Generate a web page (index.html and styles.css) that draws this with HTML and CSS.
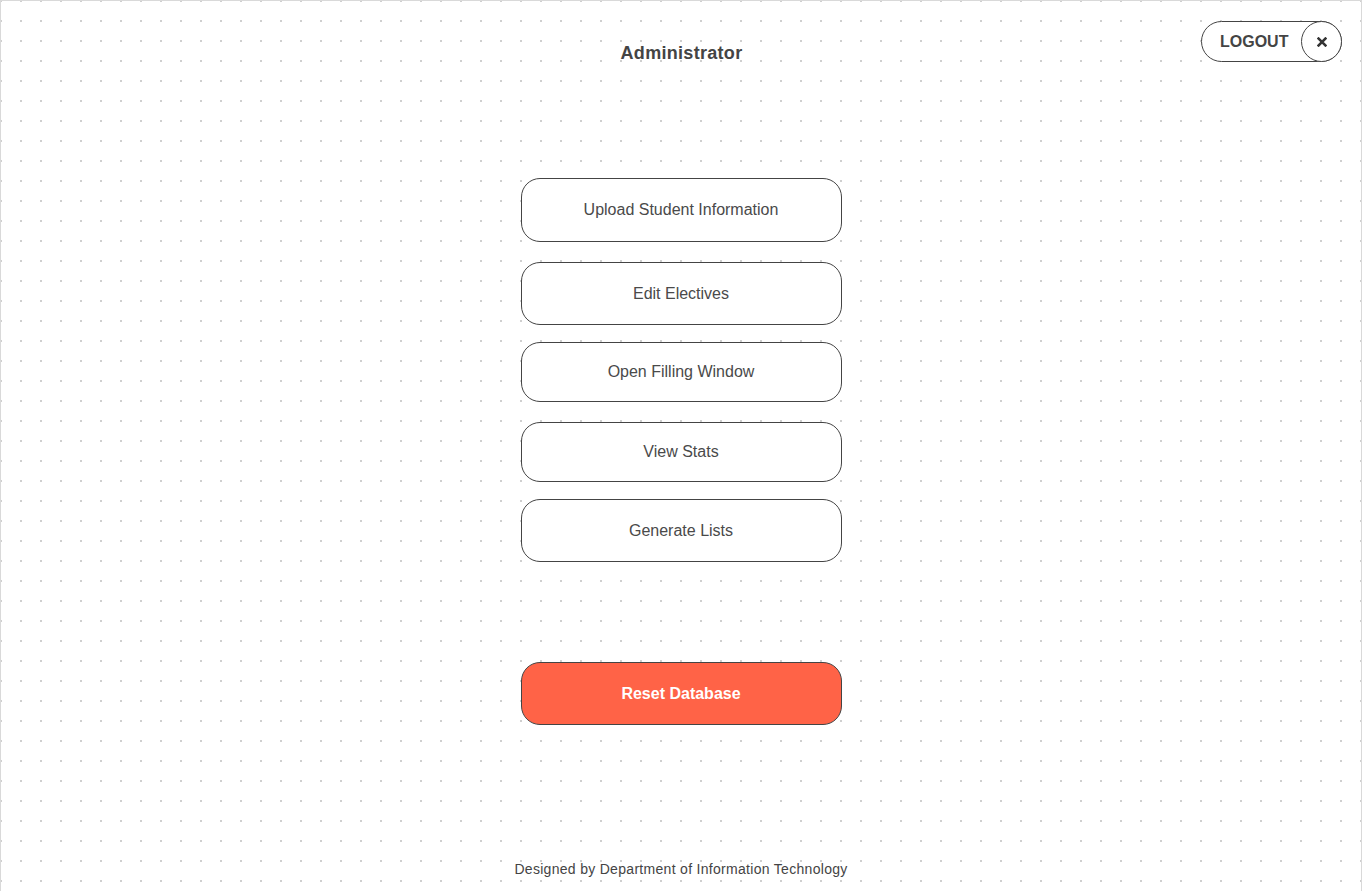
FILE: index.html
```html
<!DOCTYPE html>
<html lang="en">
<head>
<meta charset="utf-8">
<title>Administrator</title>
<link rel="stylesheet" href="styles.css">
</head>
<body>
<div class="frame">
  <header class="topbar">
    <div class="spacer"></div>
    <h1 class="title">Administrator</h1>
    <div class="logout-wrap">
      <button class="logout">
        <span class="logout-label">LOGOUT</span>
        <span class="logout-icon">
          <svg width="10" height="10" viewBox="0 0 10 10" aria-hidden="true">
            <path d="M1.6 1.6 L8.4 8.4 M8.4 1.6 L1.6 8.4" stroke="#333" stroke-width="2.6" stroke-linecap="square" fill="none"/>
          </svg>
        </span>
      </button>
    </div>
  </header>

  <main class="menu">
    <button class="menu-btn">Upload Student Information</button>
    <button class="menu-btn">Edit Electives</button>
    <button class="menu-btn menu-btn--short">Open Filling Window</button>
    <button class="menu-btn menu-btn--short">View Stats</button>
    <button class="menu-btn">Generate Lists</button>
    <button class="menu-btn menu-btn--danger">Reset Database</button>
  </main>

  <footer class="footer">Designed by Department of Information Technology</footer>
</div>
</body>
</html>
```
FILE: styles.css
```css
* { box-sizing: border-box; }

html, body {
  margin: 0;
  padding: 0;
  height: 100%;
  overflow: hidden;
}

body {
  font-family: "Liberation Sans", Arial, sans-serif;
  color: #444;
  background: #fff;
}

.frame {
  height: 100vh;
  border: 1px solid #d9d9d9;
  border-bottom: 0;
  background-color: #fff;
  background-image: radial-gradient(circle at 1px 1px, #cfcfcf 0.8px, transparent 1.2px);
  background-size: 20px 20px;
  background-position: 19px 19px;
  display: flex;
  flex-direction: column;
  align-items: stretch;
}

.topbar {
  display: grid;
  grid-template-columns: 1fr auto 1fr;
  padding: 20px 19px 0 20px;
}

.title {
  margin: 22px 0 0;
  font-size: 18px;
  line-height: 21px;
  font-weight: 700;
  letter-spacing: 0.3px;
  color: #444;
}

.logout-wrap {
  display: flex;
  justify-content: flex-end;
  align-items: flex-start;
}

.logout {
  display: flex;
  align-items: center;
  width: 141px;
  height: 41px;
  padding: 0;
  border: 1px solid #444;
  border-radius: 21px;
  background: #fff;
  font-family: inherit;
  cursor: pointer;
}

.logout-label {
  padding-left: 18px;
  font-size: 16px;
  font-weight: 700;
  color: #444;
}

.logout-icon {
  margin-left: auto;
  margin-right: -1px;
  width: 41px;
  height: 41px;
  border: 1px solid #444;
  border-radius: 50%;
  background: #fff;
  display: flex;
  align-items: center;
  justify-content: center;
}

.logout-icon svg { display: block; }

.menu {
  display: flex;
  flex-direction: column;
  align-items: center;
  padding-top: 114px;
}

.menu-btn {
  width: 321px;
  height: 63px;
  margin-top: 20px;
  border: 1px solid #444;
  border-radius: 19px;
  background: #fff;
  font-family: inherit;
  font-size: 16px;
  color: #4a4a4a;
  cursor: pointer;
}

.menu-btn:first-child { margin-top: 0; height: 64px; }
.menu-btn:nth-child(3), .menu-btn:nth-child(5) { margin-top: 17px; }

.menu-btn--short { height: 60px; }

.menu-btn--danger {
  margin-top: 100px;
  background: #ff6347;
  color: #fff;
  font-weight: 700;
}

.footer {
  margin-top: auto;
  padding-bottom: 14px;
  text-align: center;
  font-size: 14px;
  line-height: 16px;
  letter-spacing: 0.3px;
  color: #444;
}
```
